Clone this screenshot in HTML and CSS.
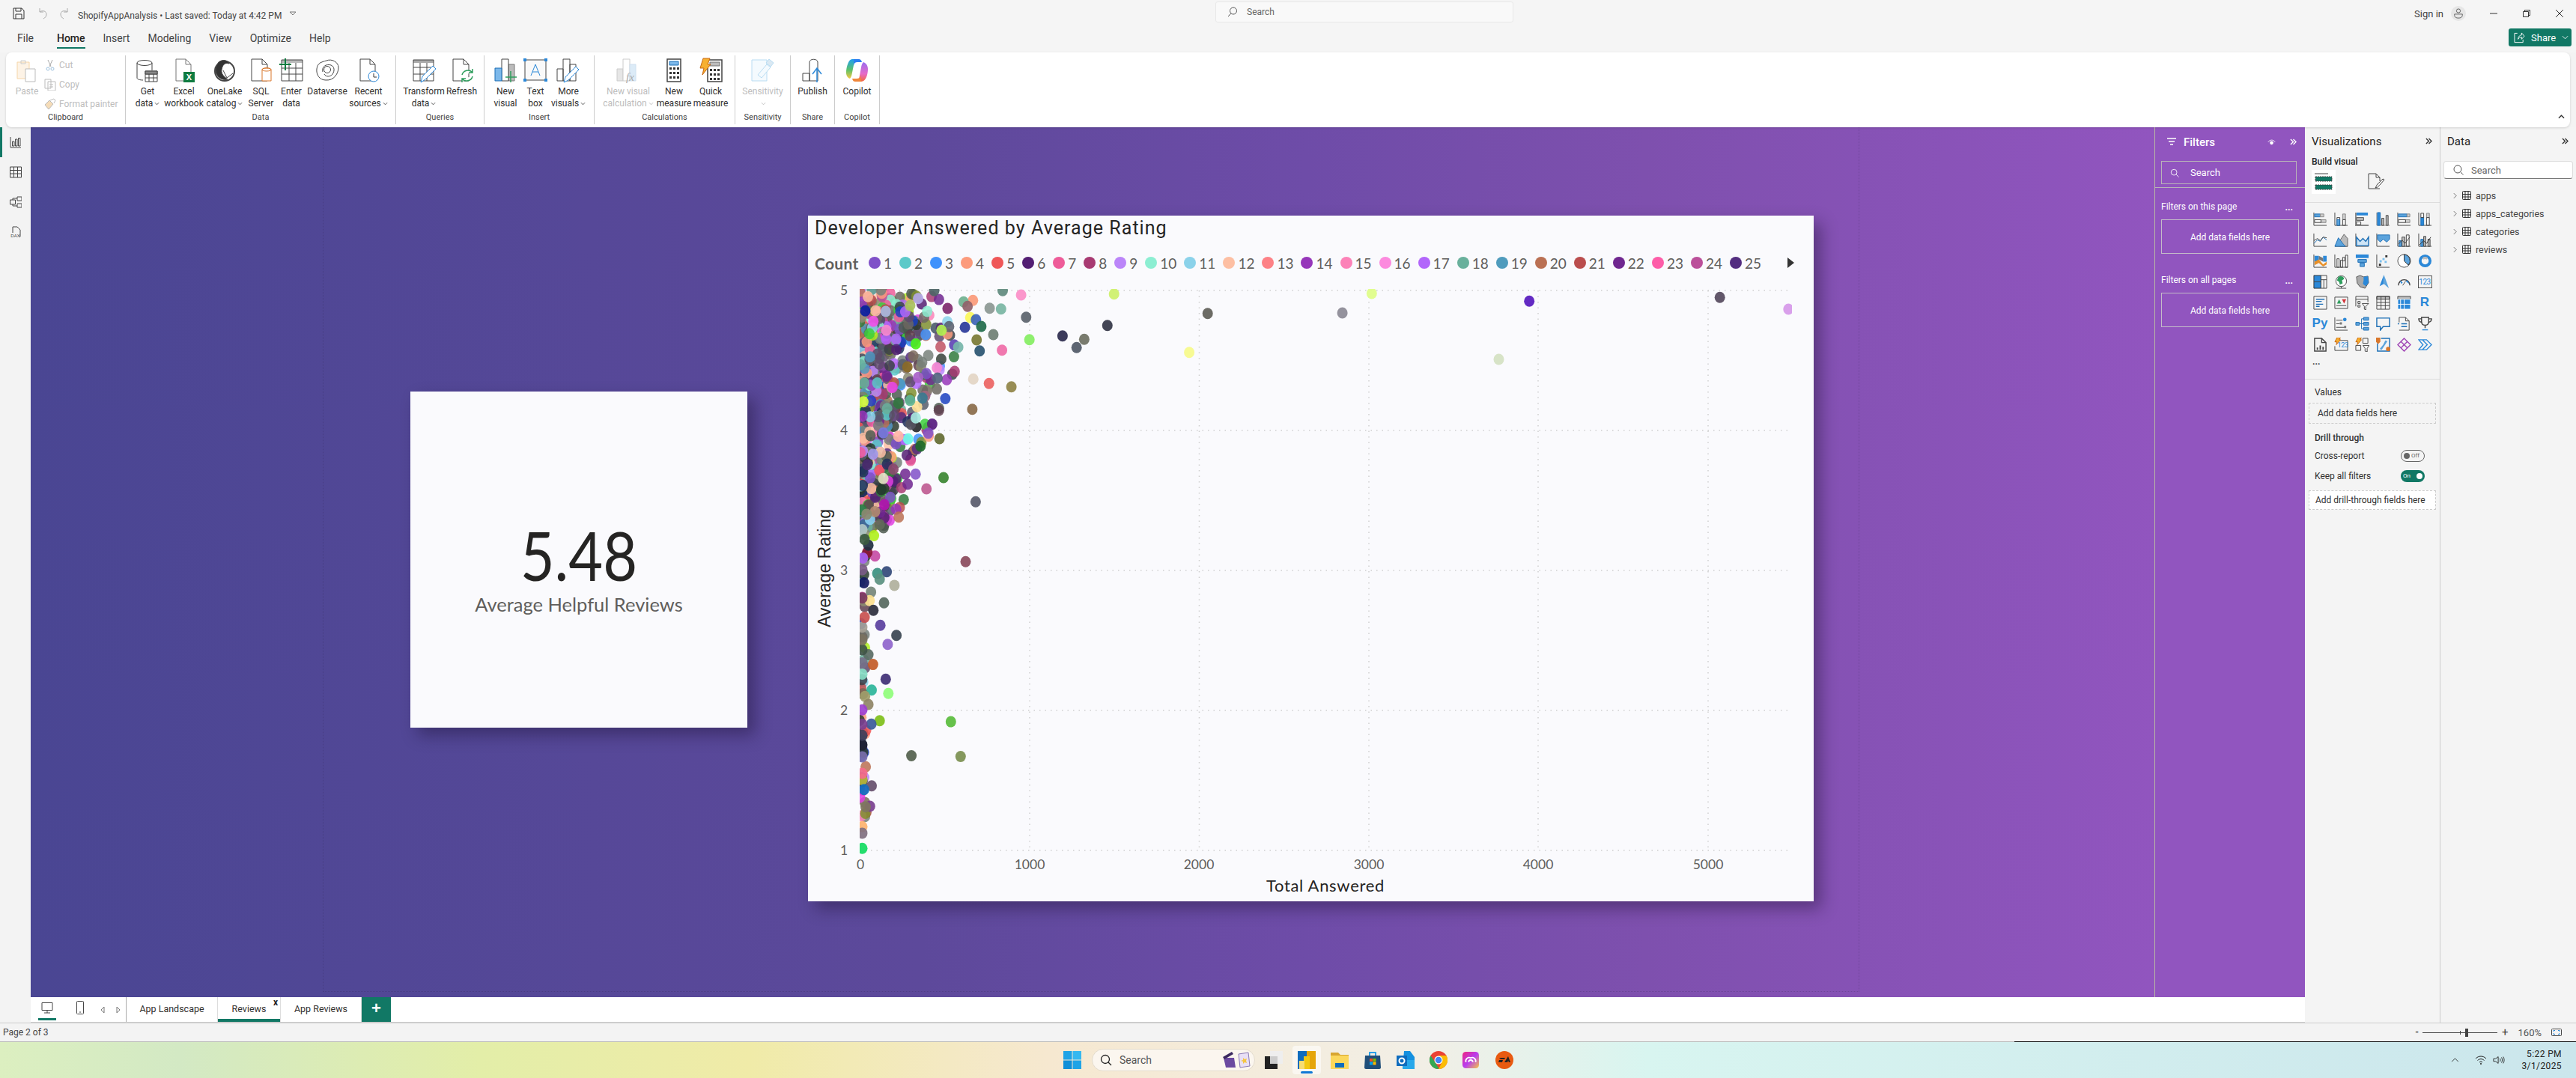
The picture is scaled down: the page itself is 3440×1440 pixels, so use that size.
FILE: index.html
```html
<!DOCTYPE html>
<html lang="en">
<head>
<meta charset="utf-8">
<title>ShopifyAppAnalysis</title>
<link rel="stylesheet" href="styles.css">
</head>
<body>
<div class="app">
  <header class="titlebar">
    <div class="qat">
      <svg class="ic q" viewBox="0 0 16 16"><path d="M1 1h11l3 3v11H1zM4 1v4h7V1M4 15V9h8v6"/></svg>
      <svg class="ic q dim" viewBox="0 0 16 16"><path d="M5 1v5h5M5 6c4-3 9-1 9 3 0 3-2 5-4 6"/></svg>
      <svg class="ic q dim" viewBox="0 0 16 16"><path d="M11 1v5H6M11 6C7 3 2 5 2 9c0 3 2 5 4 6"/></svg>
      <span class="docname">ShopifyAppAnalysis • Last saved: Today at 4:42 PM</span>
      <svg class="ic caret" viewBox="0 0 10 6"><path d="M1 1h8L5 5z"/></svg>
    </div>
    <div class="topsearch">
      <svg class="ic s14" viewBox="0 0 14 14"><circle cx="8" cy="5.500" r="4.500"/><path d="M4.800 9 1 13"/></svg>
      <span>Search</span>
    </div>
    <div class="winctl">
      <span class="signin">Sign in</span>
      <span class="avatar"><svg class="ic s14" viewBox="0 0 14 16"><circle cx="7" cy="4" r="3"/><path d="M1 9h12v2c0 3-3 4-6 4s-6-1-6-4z"/></svg></span>
      <svg class="ic wc" viewBox="0 0 12 12"><path d="M1 6h10"/></svg>
      <svg class="ic wc" viewBox="0 0 12 12"><path d="M1.500 3.500h7v7h-7zM3.500 3.500v-2h7v7h-2"/></svg>
      <svg class="ic wc" viewBox="0 0 12 12"><path d="m1 1 10 10M11 1 1 11"/></svg>
    </div>
    <nav class="tabs">
      <span class="file">File</span><span class="on">Home</span><span>Insert</span><span>Modeling</span><span>View</span><span>Optimize</span><span>Help</span>
    </nav>
    <div class="share">
      <svg class="ic sh" viewBox="0 0 16 16"><path d="M5 1.500H1v13h12v-4M6 10c0-4 3-6 5-6V1l4 4.500L11 10V7c-2 0-4 1-5 3z"/></svg>
      <span>Share</span>
      <svg class="ic shc" viewBox="0 0 10 6"><path d="m1 1 4 4 4-4"/></svg>
    </div>
  </header>

  <section class="ribbon">
    <div class="group g-clip">
      <div class="btns">
        <div class="rb w44 off">
          <svg class="ic i32" viewBox="0 0 32 32"><path stroke="#f5d5a8" fill="#fdf3e6" d="M3 5h16v22H3z"/><path stroke="#ccc" d="M8 3h6v4H8z"/><path stroke="#bbb" fill="#fff" d="M14 14h13v17H14z"/></svg>
          <span class="rl">Paste</span>
        </div>
        <div class="small off">
          <div class="sm"><svg class="ic s16" viewBox="0 0 16 16"><path stroke="#aaa" d="M5 1l4 9M11 1 7 10"/><circle stroke="#9fc2df" cx="5" cy="13" r="2"/><circle stroke="#9fc2df" cx="11" cy="13" r="2"/></svg><span>Cut</span></div>
          <div class="sm"><svg class="ic s16" viewBox="0 0 16 16"><path stroke="#bbb" d="M1 1h8v12H1zM5 4h10v12H5zM7 8h5M7 11h5"/></svg><span>Copy</span></div>
          <div class="sm"><svg class="ic s16" viewBox="0 0 16 16"><path stroke="#bbb" fill="#f5dcb8" d="M1 9l6-6 5 5-6 7z"/><path stroke="#bbb" d="m8 3 5-2 2 2-2 4"/></svg><span>Format painter</span></div>
        </div>
      </div>
      <div class="glabel">Clipboard</div>
    </div>
    <div class="group g-data">
      <div class="btns">
        <div class="rb w44">
          <svg class="ic i32" viewBox="0 0 32 32"><ellipse cx="12" cy="6" rx="10" ry="3.500"/><path d="M2 6v20c0 2 4 3 8 3M22 6v10"/><path fill="#fff" d="M13 17h16v14H13zM13 21h16M13 26h16M18 17v14M24 17v14"/><path fill="#888" d="M13 17h16v4H13z"/></svg>
          <span class="rl">Get<br>data<svg class="ic chv" viewBox="0 0 8 5"><path d="m1 1 3 3 3-3"/></svg></span>
        </div>
        <div class="rb w53">
          <svg class="ic i32" viewBox="0 0 32 32"><path stroke="#777" d="M5 1h13l7 7v22H5zM18 1v7h7"/><path stroke="none" fill="#107c41" d="M15 18h15v14H15z"/><text class="xl" x="22.500" y="29">X</text></svg>
          <span class="rl">Excel<br>workbook</span>
        </div>
        <div class="rb w56">
          <svg class="ic i32" viewBox="0 0 32 32"><circle cx="16" cy="17" r="13" stroke-width="2"/><path fill="#333" d="M8 5c5-4 12-3 14 2-6-2-9 2-10 8s3 9 8 13c-8 2-16-4-16-12 0-4 2-8 4-11z"/><path d="m14 16 5 10 8-6"/></svg>
          <span class="rl">OneLake<br>catalog<svg class="ic chv" viewBox="0 0 8 5"><path d="m1 1 3 3 3-3"/></svg></span>
        </div>
        <div class="rb w41">
          <svg class="ic i32" viewBox="0 0 32 32"><path d="M3 1h14l7 7v22H3zM17 1v7h7"/><path stroke="#d9772b" fill="#fff" d="M17 15c0-3 12-3 12 0v15H17z"/><ellipse stroke="#d9772b" cx="23" cy="15" rx="6" ry="2"/></svg>
          <span class="rl">SQL<br>Server</span>
        </div>
        <div class="rb w40">
          <svg class="ic i32" viewBox="0 0 32 32"><path fill="#bbb" stroke="none" d="M3 2h28v4H3z"/><path d="M3 2h28v28H3zM3 13h28M3 21h28M13 6v24M22 6v24"/><path stroke="#107c41" stroke-width="2" d="M8 0v16M0 8h16"/></svg>
          <span class="rl">Enter<br>data</span>
        </div>
        <div class="rb w56">
          <svg class="ic i32" viewBox="0 0 32 32"><path d="M15 3c7-3 16 2 16 9 0 8-6 18-17 17C6 29 1 22 2 14S8 5 15 3z"/><path d="M10 18c-2-7 5-11 11-9 5 2 5 8 2 12s-9 4-11 0"/><circle cx="16" cy="15" r="4.500"/></svg>
          <span class="rl">Dataverse</span>
        </div>
        <div class="rb w54">
          <svg class="ic i32" viewBox="0 0 32 32"><path d="M5 1h13l7 7v22H5zM18 1v7h7"/><circle stroke="#2b88d8" fill="#fff" cx="23" cy="24" r="7"/><path stroke="#333" d="M23 20v5h4"/></svg>
          <span class="rl">Recent<br>sources<svg class="ic chv" viewBox="0 0 8 5"><path d="m1 1 3 3 3-3"/></svg></span>
        </div>
      </div>
      <div class="glabel">Data</div>
    </div>
    <div class="group g-query">
      <div class="btns">
        <div class="rb w54">
          <svg class="ic i32" viewBox="0 0 32 32"><path fill="#aaa" stroke="none" d="M2 2h27v4H2z"/><path d="M2 2h27v28H2zM2 12h27M2 21h27M11 6v24M20 6v24"/><path stroke="#2b88d8" fill="#fff" d="m12 32 2-8 14-14 4 4-14 14z"/></svg>
          <span class="rl">Transform<br>data<svg class="ic chv" viewBox="0 0 8 5"><path d="m1 1 3 3 3-3"/></svg></span>
        </div>
        <div class="rb w47">
          <svg class="ic i32" viewBox="0 0 32 32"><path d="M4 1h14l7 7v22H4zM18 1v7h7"/><path stroke="#2f9e5e" fill="#fff" stroke-width="1.500" d="M16 22a8 8 0 0 1 14-3M30 24a8 8 0 0 1-14 3M30 14v5h-5M16 32v-5h5"/></svg>
          <span class="rl">Refresh</span>
        </div>
      </div>
      <div class="glabel">Queries</div>
    </div>
    <div class="group g-insert">
      <div class="btns">
        <div class="rb w44">
          <svg class="ic i32" viewBox="0 0 32 32"><path fill="#bbb" stroke="#777" d="M20 8h8v22h-8z"/><path fill="#fff" d="M11 1h9v29h-9z"/><path fill="#7cb8ea" stroke="#1d6fb5" d="M2 13h9v17H2z"/><path stroke="#2f9e5e" stroke-width="1.500" d="M23 17v15M16 25h15"/></svg>
          <span class="rl">New<br>visual</span>
        </div>
        <div class="rb w36">
          <svg class="ic i32" viewBox="0 0 32 32"><path fill="#f9f9f9" d="M2 2h28v27H2z"/><path stroke="none" fill="#2b88d8" d="M0 0h4v4H0zM28 0h4v4h-4zM0 27h4v4H0zM28 27h4v4h-4z"/><path stroke="#2b88d8" d="m10 23 6-15 6 15M12 18h8"/></svg>
          <span class="rl">Text<br>box</span>
        </div>
        <div class="rb w52">
          <svg class="ic i32" viewBox="0 0 32 32"><path d="M1 14h8v16H1zM9 1h9v29H9zM18 8h8v22h-8z"/><path stroke="#2b88d8" fill="#fff" d="m10 32 2-7L26 11l4 4-14 14z"/></svg>
          <span class="rl">More<br>visuals<svg class="ic chv" viewBox="0 0 8 5"><path d="m1 1 3 3 3-3"/></svg></span>
        </div>
      </div>
      <div class="glabel">Insert</div>
    </div>
    <div class="group g-calc">
      <div class="btns">
        <div class="rb w72 off">
          <svg class="ic i32" viewBox="0 0 32 32"><path stroke="#ccc" fill="#e6e6e6" d="M1 14h8v16H1z"/><path stroke="#ccc" fill="#fff" d="M9 1h9v29H9z"/><path stroke="#cfe0f0" fill="#dcebf7" d="M18 8h8v22h-8z"/><text class="fx" x="13" y="30">fx</text></svg>
          <span class="rl">New visual<br>calculation<svg class="ic chv" viewBox="0 0 8 5"><path d="m1 1 3 3 3-3"/></svg></span>
        </div>
        <div class="rb w50">
          <svg class="ic i32" viewBox="0 0 32 32"><path fill="#fff" stroke-width="1.500" d="M7 1h18v30H7z"/><path fill="#7cb8ea" stroke="#1d6fb5" d="M10 4h12v5H10z"/><path fill="#333" stroke="none" d="M10 12h3v3h-3zM15 12h3v3h-3zM20 12h3v3h-3zM10 18h3v3h-3zM15 18h3v3h-3zM20 18h3v3h-3zM10 24h3v3h-3zM15 24h3v3h-3zM20 24h3v3h-3z"/></svg>
          <span class="rl">New<br>measure</span>
        </div>
        <div class="rb w48">
          <svg class="ic i32" viewBox="0 0 32 32"><path fill="#fff" stroke-width="1.500" d="M12 2h19v29H12z"/><path fill="#bbb" stroke="#777" d="M15 5h13v5H15z"/><path fill="#333" stroke="none" d="M15 14h3v3h-3zM20 14h3v3h-3zM25 14h3v3h-3zM15 20h3v3h-3zM20 20h3v3h-3zM25 20h3v3h-3zM15 26h3v3h-3zM20 26h3v3h-3zM25 26h3v3h-3z"/><path fill="#f7b030" stroke="#c8660f" d="M6 0h9l-3 8h4L5 22l2-9H2z"/></svg>
          <span class="rl">Quick<br>measure</span>
        </div>
      </div>
      <div class="glabel">Calculations</div>
    </div>
    <div class="group g-sens">
      <div class="btns center">
        <div class="rb w72 off">
          <svg class="ic i32" viewBox="0 0 32 32"><path stroke="#b8dcf2" fill="#f4fafe" d="M1 2h20v28H1z"/><path stroke="#b8dcf2" fill="#f4fafe" d="m9 22 12-14 5 4-12 14z"/><path stroke="#b8dcf2" fill="#dbe9f3" d="m20 6 4-5 6 5-4 5z"/></svg>
          <span class="rl">Sensitivity<br><svg class="ic chv" viewBox="0 0 8 5"><path d="m1 1 3 3 3-3"/></svg></span>
        </div>
      </div>
      <div class="glabel">Sensitivity</div>
    </div>
    <div class="group g-share">
      <div class="btns center">
        <div class="rb w54">
          <svg class="ic i32" viewBox="0 0 32 32"><path d="M3 20h9v10H3zM12 5c0-5 11-5 11 0v25H12z"/><path stroke="#2b88d8" fill="none" stroke-width="1.500" d="M22 32V13M16 21l6-8 6 8"/></svg>
          <span class="rl">Publish</span>
        </div>
      </div>
      <div class="glabel">Share</div>
    </div>
    <div class="group g-copilot">
      <div class="btns center">
        <div class="rb w54">
          <svg class="ic i32" viewBox="0 0 32 32">
            <defs>
              <linearGradient id="cpa" x1="0" y1="0" x2="0" y2="1"><stop offset="0" stop-color="#1fa0f0"/><stop offset=".55" stop-color="#5cc26a"/><stop offset="1" stop-color="#f5c842"/></linearGradient>
              <linearGradient id="cpb" x1="0" y1="0" x2="0" y2="1"><stop offset="0" stop-color="#9a6ef0"/><stop offset=".6" stop-color="#e66ac8"/><stop offset="1" stop-color="#f5683c"/></linearGradient>
            </defs>
            <path stroke="none" fill="url(#cpa)" d="M9 1h8l-5 3-3 15c-.6 3-1 6-3 8-3-1-5-4-5-8 0-7 3-18 8-18z"/>
            <path stroke="none" fill="url(#cpb)" d="M21 31h-7l4-3 3-16c.5-3 1-5 3-7 3 1 6 4 6 9 0 8-3 17-9 17z"/>
            <path stroke="none" fill="#2d7ff0" d="M11 1h7c2 0 3 1 4 4h-6c-3 0-4 1-5 4z"/>
            <path stroke="none" fill="#f0873c" d="M21 31h-8c-2 0-3-1-4-4h6c3 0 4-1 5-4z"/>
          </svg>
          <span class="rl">Copilot</span>
        </div>
      </div>
      <div class="glabel">Copilot</div>
    </div>
    <svg class="ic collapse" viewBox="0 0 10 6"><path d="m1 5 4-4 4 4"/></svg>
  </section>

  <main class="work">
    <aside class="leftnav">
      <div class="navi on"><svg class="ic s16b" viewBox="0 0 16 16"><path d="M1 1v14h14M3.500 7h2.500v6H3.500zM7.500 4H10v9H7.500zM11.500 2.500H14V13h-2.500z"/></svg></div>
      <div class="navi"><svg class="ic s16b" viewBox="0 0 16 16"><path d="M.5 1h15v14H.5zM.5 5.500h15M.5 10h15M5.500 1v14M10.500 1v14"/></svg></div>
      <div class="navi"><svg class="ic s16b" viewBox="0 0 16 16"><path d="M.5 5h7v6h-7zM10 1h6v5h-6zM10 10h6v5h-6zM4 5V3h6M4 11v2h6"/></svg></div>
      <div class="navi"><svg class="ic s16b" viewBox="0 0 16 16"><path d="M4 9V1h6l4 4v9l-1 1"/><text class="dax" x="7.500" y="15">DAX</text></svg></div>
    </aside>

    <div class="canvas">
      <div class="guide"></div>
      <article class="visual kpi">
        <div class="kpi-val">5.48</div>
        <div class="kpi-lab">Average Helpful Reviews</div>
      </article>
      <article class="visual chart">
        <h2 class="ch-title">Developer Answered by Average Rating</h2>
        <div class="legend">
          <b>Count</b>
          <span class="li"><i class="c1"></i>1</span><span class="li"><i class="c2"></i>2</span><span class="li"><i class="c3"></i>3</span><span class="li"><i class="c4"></i>4</span><span class="li"><i class="c5"></i>5</span><span class="li"><i class="c6"></i>6</span><span class="li"><i class="c7"></i>7</span><span class="li"><i class="c8"></i>8</span><span class="li"><i class="c9"></i>9</span><span class="li"><i class="c10"></i>10</span><span class="li"><i class="c11"></i>11</span><span class="li"><i class="c12"></i>12</span><span class="li"><i class="c13"></i>13</span><span class="li"><i class="c14"></i>14</span><span class="li"><i class="c15"></i>15</span><span class="li"><i class="c16"></i>16</span><span class="li"><i class="c17"></i>17</span><span class="li"><i class="c18"></i>18</span><span class="li"><i class="c19"></i>19</span><span class="li"><i class="c20"></i>20</span><span class="li"><i class="c21"></i>21</span><span class="li"><i class="c22"></i>22</span><span class="li"><i class="c23"></i>23</span><span class="li"><i class="c24"></i>24</span><span class="li"><i class="c25"></i>25</span>
          <span class="more"></span>
        </div>
        <svg class="plot" viewBox="1079 370 1343 834">
          <defs><clipPath id="plotclip"><rect x="1148" y="386" width="1245" height="756"/></clipPath></defs>
          <g class="grid">
            <path d="M1148 388H2393M1148 575H2393M1148 762H2393M1148 949H2393M1148 1136H2393"/>
            <path d="M1375 388V1136M1601.500 388V1136M1828 388V1136M2054 388V1136M2281 388V1136"/>
          </g>
          <g id="dots" clip-path="url(#plotclip)"></g>
          <g class="tick">
            <text x="1127" y="394">5</text><text x="1127" y="581">4</text><text x="1127" y="768">3</text><text x="1127" y="955">2</text><text x="1127" y="1142">1</text>
            <text x="1149" y="1161">0</text><text x="1375" y="1161">1000</text><text x="1601" y="1161">2000</text><text x="1828" y="1161">3000</text><text x="2054" y="1161">4000</text><text x="2281" y="1161">5000</text>
          </g>
          <text class="xt" x="1770" y="1191">Total Answered</text>
          <text class="yt" transform="translate(1109 759) rotate(-90)">Average Rating</text>
        </svg>
      </article>
    </div>

    <aside class="filters">
      <div class="fhead">
        <svg class="ic fi" viewBox="0 0 14 12"><path d="M1 1h12M3 5h8M5 9h4"/></svg>
        <span>Filters</span>
        <svg class="ic fe" viewBox="0 0 14 10"><path d="M1 5c3-5 9-5 12 0"/><circle fill="#fff" stroke="none" cx="7" cy="6" r="3"/></svg>
        <svg class="ic fc" viewBox="0 0 10 10"><path d="m1 1 4 4-4 4M5 1l4 4-4 4"/></svg>
      </div>
      <div class="fsearch">
        <svg class="ic s14w" viewBox="0 0 14 14"><circle cx="6" cy="6" r="4.500"/><path d="m9.500 9.500 4 4"/></svg>
        <span>Search</span>
      </div>
      <div class="fsec">
        <div class="frow"><span>Filters on this page</span><span class="dots">...</span></div>
        <div class="fbox">Add data fields here</div>
      </div>
      <div class="fsec">
        <div class="frow"><span>Filters on all pages</span><span class="dots">...</span></div>
        <div class="fbox">Add data fields here</div>
      </div>
    </aside>

    <aside class="viz">
      <div class="phead"><span>Visualizations</span><svg class="ic pc" viewBox="0 0 10 10"><path d="m1 1 4 4-4 4M5 1l4 4-4 4"/></svg></div>
      <div class="bv">Build visual</div>
      <div class="vtabs">
        <span class="vt on"><svg class="ic s24" viewBox="0 0 24 24"><path d="M0 1h18"/><path fill="#117865" stroke="#444" stroke-dasharray="2 1" d="M1 5h22v6H1zM1 16h22v6H1z"/></svg></span>
        <span class="vt"><svg class="ic s24" viewBox="0 0 24 24"><path d="M17 21H2V1h10l5 5v5M12 1v5h5"/><path d="M11 20c4 0 4-3 7-5l5-6-2-1-6 6c-2 1-2 3-4 6z"/></svg></span>
      </div>
      <div class="vicons">
        <svg class="ic v" viewBox="0 0 20 20"><path d="M1 1v18h18"/><path fill="#5ba3dc" stroke="#1d6fb5" d="M2 3h8v4H2z"/><path fill="#ccc" stroke="#888" d="M10 3h5v4h-5zM11 11h7v4h-7z"/><path d="M2 11h9v4H2z"/></svg>
        <svg class="ic v" viewBox="0 0 20 20"><path d="M1 1v18h18M4 8h4v11H4z"/><path fill="#5ba3dc" stroke="#1d6fb5" d="M4 11h4v8H4z"/><path fill="#ccc" stroke="#888" d="M12 3h4v8h-4z"/><path d="M12 11h4v8h-4z"/></svg>
        <svg class="ic v" viewBox="0 0 20 20"><path stroke-width="2" stroke="#888" d="M1 1v18h18"/><path fill="#2b88d8" stroke="none" d="M2 1h16v4H2z"/><path fill="#bbb" stroke="#555" d="M2 8h10v4H2z"/><path d="M2 14h6v4H2z" fill="#fff"/></svg>
        <svg class="ic v" viewBox="0 0 20 20"><path stroke="#888" d="M1 1v18h18"/><path fill="#2b88d8" stroke="#1d6fb5" d="M2 1h4v18H2z"/><path fill="#bbb" d="M8 9h3v10H8zM14 5h3v14h-3z"/></svg>
        <svg class="ic v" viewBox="0 0 20 20"><path d="M1 1v18h18"/><path fill="#5ba3dc" stroke="#1d6fb5" d="M2 3h12v4H2z"/><path fill="#ccc" stroke="#888" d="M14 3h4v4h-4zM12 11h6v4h-6z"/><path d="M2 11h10v4H2z"/></svg>
        <svg class="ic v" viewBox="0 0 20 20"><path d="M1 1v18h18"/><path fill="#2b88d8" stroke="#1d6fb5" d="M4 8h4v11H4z"/><path d="M4 2h4v6H4z"/><path fill="#ccc" stroke="#888" d="M12 2h4v6h-4z"/><path d="M12 8h4v11h-4z"/></svg>

        <svg class="ic v" viewBox="0 0 20 20"><path d="M1 1v18h18"/><path stroke="#1d6fb5" d="m1 15 5-5 4 2 4-6 5 4"/><path d="m1 11 5-3 4 3 4-5 5 1"/></svg>
        <svg class="ic v" viewBox="0 0 20 20"><path d="M1 19h18"/><path fill="#bbb" stroke="#666" d="m8 11 6-9 5 6v11H8z"/><path fill="#5ba3dc" stroke="#1d6fb5" d="m1 19 5-12 7 9 3 3z"/></svg>
        <svg class="ic v" viewBox="0 0 20 20"><path d="M1 1v18h18"/><path stroke="#1d6fb5" stroke-width="1.500" fill="#cfe5f6" d="m2 6 5 6 4-4 4 4 4-6v12H2z"/></svg>
        <svg class="ic v" viewBox="0 0 20 20"><path d="M1 1v18h18"/><path fill="#5ba3dc" stroke="#1d6fb5" d="M2 3h17v6l-4 4-5-4-4 4-4-4z"/></svg>
        <svg class="ic v" viewBox="0 0 20 20"><path d="M1 1v18h18M13 3h4v16h-4z"/><path fill="#bbb" d="M7 6h4v13H7z"/><path fill="#5ba3dc" stroke="#1d6fb5" d="M3 11h3v8H3z"/><path d="m2 16 5-6 4 5 7-9"/></svg>
        <svg class="ic v" viewBox="0 0 20 20"><path d="M1 1v18h18"/><path fill="#5ba3dc" stroke="#1d6fb5" d="M4 9h3v10H4z"/><path fill="#bbb" d="M8 5h3v14H8zM14 9h3v10h-3z"/><path stroke="#333" d="m2 17 6-6 4 4 6-9"/></svg>

        <svg class="ic v" viewBox="0 0 20 20"><path d="M1 1v18h18"/><path fill="#2b88d8" stroke="none" d="M2 3h6v8H2zM14 3h5v8h-5z"/><path fill="#e8912a" stroke="none" d="m2 11 6-3 6 7 5-4v4l-5 3-6-5-6 3z"/><path fill="#777" stroke="none" d="m8 3 6 3v5l-6-3z"/></svg>
        <svg class="ic v" viewBox="0 0 20 20"><path d="M1 1v18h18M4 7v12h3V7zM9 9v10h3V9zM12 5h3v5h-3zM16 2h3v17h-3z"/></svg>
        <svg class="ic v" viewBox="0 0 20 20"><path fill="#2b88d8" stroke="none" d="M1 1h18v5H1z"/><path fill="#5ba3dc" stroke="#1d6fb5" d="M4 8h12v4H4zM7 13h6v5H7z"/></svg>
        <svg class="ic v" viewBox="0 0 20 20"><path d="M1 1v18h18"/><path fill="#333" stroke="none" d="M4 14h3v3H4zM13 2h3v3h-3z"/><path fill="#7cc0ee" stroke="none" d="M9 6h3v3H9zM5 9h3v3H5zM12 10h3v3h-3z"/></svg>
        <svg class="ic v" viewBox="0 0 20 20"><circle fill="#fff" cx="10" cy="10" r="9"/><path fill="#5ba3dc" stroke="#333" d="M10 1a9 9 0 0 1 6 15l-6-6z"/></svg>
        <svg class="ic v" viewBox="0 0 20 20"><circle fill="none" stroke="#2b88d8" stroke-width="4" cx="10" cy="10" r="7"/><path stroke="#bbb" stroke-width="3" d="M7 7a5 5 0 0 1 6 0"/></svg>

        <svg class="ic v" viewBox="0 0 20 20"><path fill="#2b88d8" stroke="#333" d="M1 1h10v18H1z"/><path d="M1 10h10M11 1h8v18h-8zM11 7h8M15 7v12"/></svg>
        <svg class="ic v" viewBox="0 0 20 20"><circle fill="#fff" cx="10" cy="9" r="7.500"/><path fill="#2f9e5e" stroke="none" d="M6 3c4-2 8 0 8 3l-3 2 1 4-4 2-1-4-3-2z"/><path d="M3 19h14M10 16.500V19"/></svg>
        <svg class="ic v" viewBox="0 0 20 20"><path fill="#aaa" stroke="#555" d="M2 3l5-2 5 2 6-1 1 9-5 8-7-2-4-5z"/><path fill="#2b88d8" stroke="none" d="m12 3 6-1 1 9-4 5-4-3 1-5z"/></svg>
        <svg class="ic v" viewBox="0 0 20 20"><path fill="#2b88d8" stroke="none" d="M11 0 5 16l6-3z"/><path fill="#5ba3dc" stroke="none" d="m11 0 7 19-7-6z"/></svg>
        <svg class="ic v" viewBox="0 0 20 20"><path stroke-width="1.500" d="M2 15a8 8 0 0 1 16 0"/><path fill="#2b88d8" stroke="none" d="M6 13 4 8l4 3zM12 9l3-1 2 5z"/><path d="m8 15 4-6"/></svg>
        <span class="v cardi">123</span>

        <svg class="ic v" viewBox="0 0 20 20"><path d="M1 1h18v18H1z"/><path stroke="#1d6fb5" stroke-width="1.500" d="M4 5h12M4 8h8M4 12h10M4 15h5"/></svg>
        <svg class="ic v" viewBox="0 0 20 20"><path d="M1 2h18v16H1zM3 14h14"/><path fill="#2f9e5e" stroke="none" d="m4 11 3-6 3 6z"/><path fill="#d13438" stroke="none" d="m11 5h6l-3 6z"/></svg>
        <svg class="ic v" viewBox="0 0 20 20"><path d="M1 15V1h17v8M1 5h17M4 8h3v3H4zM4 13h3v3H4z"/><path d="m10 11h9l-4 4v5l-2-1v-4z"/></svg>
        <svg class="ic v" viewBox="0 0 20 20"><path fill="#bbb" stroke="#444" d="M1 1h18v4H1z"/><path d="M1 1h18v18H1zM1 9.500h18M1 14h18M7 1v18M13 1v18"/></svg>
        <svg class="ic v" viewBox="0 0 20 20"><path fill="#bbb" stroke="#444" d="M1 1h18v4H1z"/><path fill="#2b88d8" stroke="#fff" d="M1 5h18v14H1zM1 12h18M10 5v14M5 5v14"/></svg>
        <span class="v lang r">R</span>

        <span class="v lang py">Py</span>
        <svg class="ic v" viewBox="0 0 20 20"><path d="M1 1v18h18M3 5h9M3 10h5M3 15h12"/><circle fill="#2b88d8" stroke="none" cx="15" cy="4" r="2.500"/><path fill="#777" stroke="none" d="M8 8h3v3H8zM14 13h3v3h-3z"/></svg>
        <svg class="ic v" viewBox="0 0 20 20"><path fill="#5ba3dc" stroke="#1d6fb5" d="M1 8h5v4H1zM12 1h7v4h-7zM12 8h7v4h-7zM12 15h7v4h-7z"/><path stroke="#1d6fb5" d="M6 10h3M9 3v14M9 3h3M9 10h3M9 17h3"/></svg>
        <svg class="ic v" viewBox="0 0 20 20"><path stroke="#1d6fb5" stroke-width="1.500" d="M1 2h18v12H10l-4 5v-5H1z"/></svg>
        <svg class="ic v" viewBox="0 0 20 20"><path d="M3 19h14V6l-5-5H3v7M12 1v5h5"/><path stroke="#1d6fb5" stroke-width="1.500" d="M1 10h2M6 10h8M6 14h8"/></svg>
        <svg class="ic v" viewBox="0 0 20 20"><path stroke-width="1.500" d="M5 1h10v6c0 3-2 5-5 5s-5-2-5-5zM5 3H1c0 3 2 5 5 5M15 3h4c0 3-2 5-5 5M10 12v4"/><path stroke="#2b88d8" stroke-width="1.500" d="M6 18.500h8"/></svg>

        <svg class="ic v" viewBox="0 0 20 20"><path stroke-width="1.500" d="M2 19V1h10l6 6v12zM12 1v6h6"/><path fill="#444" stroke="none" d="M5 14h2v3H5zM9 11h2v6H9zM13 13h2v4h-2z"/></svg>
        <span class="v lcard"><svg class="ic v" viewBox="0 0 20 20"><path d="M3 4h16v14H1v-6"/><path fill="#f7b030" stroke="#c8660f" d="M4 0h5L7 3h2L3 10l1-4H1z"/></svg><em>123</em></span>
        <svg class="ic v" viewBox="0 0 20 20"><path d="M11 1h7v7h-7zM1 11h7v7H1zM11 11h9l-3 4v5l-3-1v-4z"/><path fill="#f7b030" stroke="#c8660f" d="M4 0h5L7 3h2L3 10l1-4H1z"/></svg>
        <svg class="ic v" viewBox="0 0 20 20"><path stroke="#1d6fb5" stroke-width="1.500" d="M2 8v11h17V1H7"/><path fill="#5ba3dc" stroke="none" d="m5 16 5-6 3-6 3 1-4 6-4 6z"/><path fill="#d9772b" stroke="none" d="M0 0h6v6l-3 3-3-3z"/><circle fill="#d9772b" stroke="none" cx="17" cy="16" r="3"/></svg>
        <svg class="ic v" viewBox="0 0 20 20"><path stroke="#a045b5" stroke-width="1.500" d="m10 1 9 9-9 9-9-9zM5.500 5.500l9 9M14.500 5.500l-9 9"/></svg>
        <svg class="ic v" viewBox="0 0 20 20"><path stroke="#2b88d8" stroke-width="1.500" d="M1 3h11l7 7-7 7H1l6-7zM6 3l7 7-7 7"/></svg>
      </div>
      <div class="vmore">...</div>
      <div class="vsec">
        <div class="vl">Values</div>
        <div class="dash">Add data fields here</div>
        <div class="vb">Drill through</div>
        <div class="tgrow"><span>Cross-report</span><span class="tg off"><u></u>Off</span></div>
        <div class="tgrow"><span>Keep all filters</span><span class="tg ton">On<u></u></span></div>
        <div class="dash white">Add drill-through fields here</div>
      </div>
    </aside>

    <aside class="data">
      <div class="phead"><span>Data</span><svg class="ic pc" viewBox="0 0 10 10"><path d="m1 1 4 4-4 4M5 1l4 4-4 4"/></svg></div>
      <div class="dsearch">
        <svg class="ic s14" viewBox="0 0 14 14"><circle cx="6" cy="6" r="5"/><path d="m9.500 9.500 4 4"/></svg>
        <span>Search</span>
      </div>
      <ul class="tree">
        <li><svg class="ic tc" viewBox="0 0 6 10"><path d="m1 1 4 4-4 4"/></svg><svg class="ic tt" viewBox="0 0 12 12"><path d="M.5 1.500a1 1 0 0 1 1-1h9a1 1 0 0 1 1 1v9a1 1 0 0 1-1 1h-9a1 1 0 0 1-1-1zM.5 4.500h11M.5 8h11M4 .5v11M8 .5v11"/></svg>apps</li>
        <li><svg class="ic tc" viewBox="0 0 6 10"><path d="m1 1 4 4-4 4"/></svg><svg class="ic tt" viewBox="0 0 12 12"><path d="M.5 1.500a1 1 0 0 1 1-1h9a1 1 0 0 1 1 1v9a1 1 0 0 1-1 1h-9a1 1 0 0 1-1-1zM.5 4.500h11M.5 8h11M4 .5v11M8 .5v11"/></svg>apps_categories</li>
        <li><svg class="ic tc" viewBox="0 0 6 10"><path d="m1 1 4 4-4 4"/></svg><svg class="ic tt" viewBox="0 0 12 12"><path d="M.5 1.500a1 1 0 0 1 1-1h9a1 1 0 0 1 1 1v9a1 1 0 0 1-1 1h-9a1 1 0 0 1-1-1zM.5 4.500h11M.5 8h11M4 .5v11M8 .5v11"/></svg>categories</li>
        <li><svg class="ic tc" viewBox="0 0 6 10"><path d="m1 1 4 4-4 4"/></svg><svg class="ic tt" viewBox="0 0 12 12"><path d="M.5 1.500a1 1 0 0 1 1-1h9a1 1 0 0 1 1 1v9a1 1 0 0 1-1 1h-9a1 1 0 0 1-1-1zM.5 4.500h11M.5 8h11M4 .5v11M8 .5v11"/></svg>reviews</li>
      </ul>
    </aside>

    <div class="pagetabs">
      <div class="pt-ctl">
        <span class="dev on"><svg class="ic s16b" viewBox="0 0 16 16"><path d="M1 1.500h14v10H1zM8 11.500V15M4 15h8"/></svg></span>
        <span class="dev mobile"><svg class="ic mob" viewBox="0 0 10 18"><path d="M1.500.5h7a1 1 0 0 1 1 1v15a1 1 0 0 1-1 1h-7a1 1 0 0 1-1-1v-15a1 1 0 0 1 1-1zM4 15h2"/></svg></span>
        <svg class="ic arr" viewBox="0 0 6 10"><path d="M5 1 1 5l4 4z"/></svg>
        <svg class="ic arr" viewBox="0 0 6 10"><path d="m1 1 4 4-4 4z"/></svg>
      </div>
      <div class="pt t1">App Landscape</div>
      <div class="pt t2 on">Reviews<span class="x">x</span></div>
      <div class="pt t3">App Reviews</div>
      <div class="addtab">+</div>
    </div>
  </main>

  <footer class="status">
    <span class="pg">Page 2 of 3</span>
    <div class="zoom">
      <span class="zm">-</span>
      <span class="zline"><i class="ztick"></i><i class="zthumb"></i></span>
      <span class="zp">+</span>
      <span class="zv">160%</span>
      <svg class="ic zf" viewBox="0 0 14 10"><path d="M1.500.5h11a1 1 0 0 1 1 1v7a1 1 0 0 1-1 1h-11a1 1 0 0 1-1-1v-7a1 1 0 0 1 1-1z"/><path d="M3 4V2.500h2M11 4V2.500H9M3 6v1.500h2M11 6v1.500H9" stroke="#2b88d8"/></svg>
    </div>
    <i class="blackline"></i>
  </footer>

  <div class="taskbar">
    <div class="tb-center">
      <svg class="tbi win" viewBox="0 0 24 24"><path fill="#1ea3e6" d="M0 0h11.500v11.500H0z"/><path fill="#35b8f0" d="M12.500 0H24v11.500H12.500z"/><path fill="#0f8fd8" d="M0 12.500h11.500V24H0z"/><path fill="#1ea3e6" d="M12.500 12.500H24V24H12.500z"/></svg>
      <div class="tsearch">
        <svg class="ic s16d" viewBox="0 0 16 16"><circle cx="7" cy="7" r="5.500"/><path d="m11 11 4 4"/></svg>
        <span>Search</span>
        <svg class="tbi clap" viewBox="0 0 38 24"><path fill="#6b4aa0" d="M1 9h14l2 13H4z"/><path fill="#3c2a60" d="m0 8 12-7 2 3L2 11z"/><path fill="#e8dff5" stroke="#8a7ab5" d="m21 4 13-2 2 18-13 2z"/><path fill="#f5c542" d="m27 9 2 2 3-1-1 3 1 3-3-1-2 2v-3l-3-1 3-1z"/></svg>
      </div>
      <svg class="tbi s24t tv" viewBox="0 0 24 24"><path fill="#eee" d="M7 0h17v17H7z"/><path fill="#222" d="M0 7h17v17H0z"/><path fill="#ccc" d="M7 7h10v10H7z"/></svg>
      <span class="tb-active">
        <svg class="tbi s24t" viewBox="0 0 24 24"><path fill="#0f6cbd" d="M0 0h24v24H0z"/><path fill="#e5a50a" d="M12 0h12v24H12z"/><path fill="#f2c811" d="M8 7h8v17H8z"/><path fill="#f7dd72" d="M2 13h7v11H2z"/></svg>
        <i></i>
      </span>
      <svg class="tbi s24t" viewBox="0 0 24 24"><path fill="#d8a530" d="M0 2h10l3 3h11v4H0z"/><path fill="#fbd75b" d="M0 6h24v18H0z"/><path fill="#0f6cbd" d="M6 16h12v6H6z"/></svg>
      <svg class="tbi s24t" viewBox="0 0 24 24"><path fill="none" stroke="#2ba0e8" stroke-width="2" d="M8 6V2h8v4"/><path fill="#1f4e79" d="M2 6h20l1 16c0 1-1 2-2 2H3c-1 0-2-1-2-2z"/><path fill="#f25022" d="M8 10h4v4H8z"/><path fill="#7fba00" d="M12.500 10h4v4h-4z"/><path fill="#00a4ef" d="M8 14.500h4v4H8z"/><path fill="#ffb900" d="M12.500 14.500h4v4h-4z"/></svg>
      <svg class="tbi s24t" viewBox="0 0 24 24"><path fill="#1490df" d="M10 0h8l6 8v16H8z"/><path fill="#28a8ea" d="M8 12h16v12H8z"/><path fill="#0f6cbd" d="M0 6h14v14H0z"/><circle fill="none" stroke="#fff" stroke-width="2" cx="7" cy="13" r="3.500"/></svg>
      <svg class="tbi s24t" viewBox="0 0 24 24"><circle fill="#ea4335" cx="12" cy="12" r="12"/><path fill="#34a853" d="M12 24A12 12 0 0 1 1.600 6L8 16l5 8z"/><path fill="#fbbc05" d="M12 24a12 12 0 0 0 10.400-18H12l4 10z"/><circle fill="#fff" cx="12" cy="12" r="5.500"/><circle fill="#4285f4" cx="12" cy="12" r="4.300"/></svg>
      <svg class="tbi s22t" viewBox="0 0 24 24"><defs><linearGradient id="cc" x1="0" y1="0" x2="1" y2="1"><stop offset="0" stop-color="#f0247e"/><stop offset=".5" stop-color="#b83cf0"/><stop offset="1" stop-color="#f5c842"/></linearGradient></defs><rect fill="url(#cc)" width="24" height="24" rx="5"/><path fill="none" stroke="#fff" stroke-width="2" d="M5 15a5 5 0 0 1 7-6 5 5 0 0 1 7 6M9 15a3 3 0 0 1 6 0"/></svg>
      <svg class="tbi s24t" viewBox="0 0 24 24"><circle fill="#e85a10" cx="12" cy="12" r="12"/><path fill="#222" d="M5 9h8l-1 2H7zM4 15l1-3h5l-1 3zM12 15l5-8 3 8h-2l-1-2-1 2z"/></svg>
    </div>
    <div class="tray">
      <svg class="ic tr-c" viewBox="0 0 12 7"><path d="m1 6 5-5 5 5"/></svg>
      <svg class="ic tr-w" viewBox="0 0 16 12"><path d="M1 4c4-4 10-4 14 0M3.500 6.500c3-2.500 6-2.500 9 0M6 9c1.300-1 2.700-1 4 0"/><circle fill="#222" stroke="none" cx="8" cy="11" r="1"/></svg>
      <svg class="ic tr-s" viewBox="0 0 18 12"><path d="M1 4h3l4-3v10L4 8H1zM10.500 3.500c1 1.500 1 3.500 0 5M13 2c1.500 2.500 1.500 5.500 0 8M15.500 1c2 3 2 7 0 10"/></svg>
      <div class="clock"><span>5:22 PM</span><span>3/1/2025</span></div>
    </div>
  </div>
</div>
<script src="app.js"></script>
</body>
</html>
```
FILE: styles.css
```css
* { box-sizing: border-box; }
html, body { margin: 0; padding: 0; }
body { width: 3440px; height: 1440px; overflow: hidden; font-family: Roboto, "Liberation Sans", sans-serif; font-size: 12px; color: #323130; background: #f3f3f3; }
.app { width: 3440px; height: 1440px; display: flex; flex-direction: column; }
.ic { fill: none; stroke: #444; stroke-width: 1; display: block; flex: none; }
.tbi { display: block; flex: none; }

/* title bar */
.titlebar { height: 70px; background: #f5f5f5; display: grid; grid-template-columns: 1623px 398px 1fr; grid-template-rows: 36px 34px; position: relative; }
.qat { display: flex; align-items: center; padding-left: 17px; gap: 15px; }
.q { width: 16px; height: 16px; stroke: #333; }
.q.dim { stroke: #aaa; }
.docname { margin-left: -6px; font-size: 12px; color: #444; padding-top: 6px; }
.caret { width: 10px; height: 6px; margin-left: -5px; stroke: #777; }
.topsearch { height: 28px; margin-top: 2px; background: #f9f9f9; border: 1px solid #e8e8e8; border-radius: 3px; display: flex; align-items: center; gap: 12px; padding-left: 15px; color: #666; font-size: 12px; }
.s14 { width: 14px; height: 14px; stroke: #555; }
.winctl { display: flex; align-items: center; justify-content: flex-end; color: #444; padding-right: 16px; }
.signin { margin-right: 10px; font-size: 13px; }
.avatar { width: 20px; height: 20px; border-radius: 50%; background: #e6e6e6; display: flex; align-items: center; justify-content: center; margin-right: 31px; }
.wc { width: 12px; height: 12px; margin-left: 32px; stroke: #333; }
.avatar + .wc { margin-left: 0; }
.tabs { grid-column: 1 / 3; display: flex; gap: 24px; padding: 1px 0 0 23px; font-size: 14px; line-height: 28px; color: #444; }
.tabs span { height: 28px; }
.tabs .file { margin-right: 7px; }
.tabs .on { color: #252423; font-weight: 500; border-bottom: 2px solid #117865; }
.share { grid-column: 3; justify-self: end; margin: 2px 6px 0 0; width: 84px; height: 24px; border-radius: 3px; background: #117865; color: #fff; display: flex; align-items: center; gap: 8px; padding-left: 7px; font-size: 13px; }
.sh { width: 15px; height: 15px; stroke: #fff; }
.shc { width: 9px; height: 6px; stroke: #fff; }

/* ribbon */
.ribbon { height: 100px; width: 3424px; margin-left: 8px; background: #fff; border-radius: 8px; display: flex; padding: 4px 0; position: relative; z-index: 3; box-shadow: 0 1px 3px rgba(0,0,0,.15); }
.group { height: 92px; border-right: 1px solid #ccc; display: flex; flex-direction: column; }
.btns { height: 74px; display: flex; align-items: flex-start; padding-top: 4px; }
.btns.center { justify-content: center; }
.glabel { text-align: center; font-size: 11px; line-height: 16px; color: #444; margin-top: 1px; }
.g-clip { width: 160px; } .g-clip .btns { padding-left: 6px; }
.g-data { width: 361px; } .g-data .btns { padding-left: 7px; }
.g-query { width: 118px; } .g-query .btns { padding-left: 10px; }
.g-insert { width: 147px; } .g-insert .btns { padding-left: 6px; }
.g-calc { width: 188px; } .g-calc .btns { padding-left: 9px; }
.g-sens { width: 74px; }
.g-share { width: 59px; }
.g-copilot { width: 60px; }
.rb { display: flex; flex-direction: column; align-items: center; flex: none; }
.w36 { width: 36px; } .w40 { width: 40px; } .w41 { width: 41px; } .w44 { width: 44px; } .w47 { width: 47px; } .w48 { width: 48px; } .w50 { width: 50px; } .w52 { width: 52px; } .w53 { width: 53px; } .w54 { width: 54px; } .w56 { width: 56px; } .w72 { width: 72px; }
.i32 { width: 32px; height: 32px; overflow: visible; }
.rl { margin-top: 4px; text-align: center; line-height: 16px; color: #323130; white-space: nowrap; }
.chv { display: inline-block; width: 7px; height: 5px; margin-left: 2px; vertical-align: 1px; stroke: #444; }
.off .rl, .off .sm { color: #bdbdbd; }
.off .chv { stroke: #bbb; }
.small { margin: -4px 0 0 1px; }
.sm { display: flex; align-items: center; gap: 4px; height: 26px; white-space: nowrap; }
.s16 { width: 16px; height: 16px; }
.xl { font: 700 11px "Liberation Sans", sans-serif; fill: #fff; stroke: none; text-anchor: middle; }
.fx { font: italic 15px "Liberation Serif", serif; fill: #aaa; stroke: none; }
.collapse { position: absolute; right: 7px; top: 83px; width: 9px; height: 6px; stroke: #333; stroke-width: 1.500; }

/* work area */
.work { height: 1197px; display: grid; grid-template-columns: 41px 2836px 201px 181px 181px; grid-template-rows: 1162px 35px; }
.leftnav { grid-row: 1 / 3; background: #f3f3f3; border-bottom: 1px solid #ccc; }
.navi { height: 40px; display: flex; align-items: center; justify-content: center; }
.navi.on { box-shadow: inset 3px 0 0 #117865; }
.s16b { width: 16px; height: 16px; }
.dax { font: 6px "Liberation Sans", sans-serif; fill: #444; stroke: none; text-anchor: middle; }

.canvas { position: relative; overflow: hidden; background: linear-gradient(90deg, #4a4693 0%, #5d499b 42%, #6e4ca8 60%, #7e50ae 76%, #9155bf 100%); }
.guide { position: absolute; left: 390px; width: 2052px; top: 0; bottom: 7px; border: 1px dotted rgba(40,30,70,.22); border-top: 0; }
.visual { position: absolute; background: #fafafd; box-shadow: 10px 10px 20px rgba(20,10,40,.38); }
.kpi { left: 507px; top: 353px; width: 450px; height: 449px; display: flex; flex-direction: column; align-items: center; justify-content: center; padding-top: 22px; }
.kpi-val { font-family: Lato, sans-serif; font-size: 92px; line-height: 92px; color: #252423; transform: scaleX(.86); }
.kpi-lab { font-family: Lato, sans-serif; font-size: 25.500px; line-height: 32px; color: #605e5c; margin-top: 4px; }

.chart { left: 1038px; top: 118px; width: 1343px; height: 916px; display: flex; flex-direction: column; }
.ch-title { margin: 0; height: 34px; padding-left: 9px; font-family: Roboto, sans-serif; font-weight: 400; font-size: 25px; line-height: 34px; color: #252423; letter-spacing: 1.050px; white-space: nowrap; }
.legend { height: 24px; margin-top: 17px; padding-left: 9px; display: flex; align-items: center; gap: 10px; font-family: Lato, sans-serif; font-size: 19px; color: #605e5c; }
.legend b { width: 62px; font-size: 21px; letter-spacing: .3px; }
.li { display: flex; align-items: center; gap: 4px; flex: none; }
.li i { width: 16px; height: 16px; border-radius: 50%; display: block; }
.more { margin-left: auto; margin-right: 26px; width: 0; height: 0; border-left: 9px solid #333; border-top: 7px solid transparent; border-bottom: 7px solid transparent; }
.c1{background:#7f50c8}.c2{background:#5bc9c9}.c3{background:#3f92fc}.c4{background:#fc9b7c}.c5{background:#ef5758}.c6{background:#531e73}.c7{background:#ee5c99}.c8{background:#a83a72}.c9{background:#bb85f9}.c10{background:#8ceed2}.c11{background:#8bd2ea}.c12{background:#fdbfa3}.c13{background:#fd8186}.c14{background:#9636ba}.c15{background:#fc82b8}.c16{background:#fc8ade}.c17{background:#b266fb}.c18{background:#69b09c}.c19{background:#4f9bbd}.c20{background:#ba7053}.c21{background:#ba4d4d}.c22{background:#6f268f}.c23{background:#fd5da8}.c24{background:#bb4f9a}.c25{background:#532d80}
.plot { display: block; width: 1343px; height: 834px; margin-top: 7px; flex: none; }
.grid path { stroke: #cfcfcf; stroke-width: 1.500; stroke-dasharray: 1.500 6; fill: none; }
.tick text { font-family: Lato, sans-serif; font-size: 17.500px; fill: #605e5c; text-anchor: middle; }
.xt { font-family: Lato, sans-serif; font-size: 22px; fill: #252423; text-anchor: middle; letter-spacing: .7px; }
.yt { font-family: "Liberation Sans", sans-serif; font-size: 23px; fill: #252423; text-anchor: middle; }

/* filters */
.filters { background: #9155bf; border-left: 1px solid #b9b8a4; color: #fff; }
.fhead { height: 45px; display: flex; align-items: center; padding: 0 0 6px 15px; font-size: 15px; font-weight: 500; }
.fi { width: 14px; height: 12px; stroke: #fff; stroke-width: 1.500; margin-right: 9px; }
.fe { width: 11px; height: 8px; stroke: #fff; margin-left: 70px; }
.fc { width: 9px; height: 9px; stroke: #fff; stroke-width: 1.500; margin-left: 19px; }
.fsearch { height: 31px; margin: 0 11px 0 8px; border: 1px solid #b9b3b8; display: flex; align-items: center; padding-left: 11px; gap: 15px; font-size: 13px; }
.s14w { width: 12px; height: 12px; stroke: #fff; }
.fsec { padding: 17px 8px 0; }
.fsearch + .fsec { margin-top: 4px; border-top: 1px solid #b9b3b8; }
.frow { height: 17px; display: flex; justify-content: space-between; align-items: center; padding-right: 8px; line-height: 17px; }
.dots { font-weight: 700; line-height: 10px; }
.fbox { margin-top: 8px; height: 46px; border: 1px solid #c4bcc8; margin-bottom: 10px; display: flex; align-items: center; justify-content: center; font-size: 12px; padding-top: 1px; }

/* panes */
.viz, .data { grid-row: 1 / 3; background: #f4f4f4; border-right: 1px solid #ccc; border-bottom: 1px solid #ccc; }
.viz { grid-column: 4; }
.data { grid-column: 5; border-right: 0; }
.phead { height: 40px; display: flex; align-items: center; justify-content: space-between; padding: 0 10px 3px 9px; font-size: 15px; color: #252423; }
.pc { width: 9px; height: 9px; stroke: #333; stroke-width: 1.500; }
.bv { margin: 0 0 0 9px; font-weight: 500; color: #252423; height: 17px; line-height: 13px; }
.vtabs { display: flex; gap: 38px; height: 44px; padding: 0 0 0 9px; border-bottom: 1px solid #ddd; position: relative; }
.vt { width: 32px; height: 32px; display: flex; align-items: center; justify-content: center; }
.vt.on { background: #fff; }
.s24 { width: 24px; height: 24px; }
.vicons { margin: 7px 0 0 6px; display: grid; grid-template-columns: repeat(6, 28px); grid-auto-rows: 28px; }
.v { width: 19px; height: 19px; justify-self: center; align-self: center; }
.cardi { border: 1px solid #555; display: flex; align-items: center; justify-content: center; color: #2b88d8; font-size: 10px; width: 19px; height: 17px; letter-spacing: -.5px; }
.lang { color: #2b88d8; font-weight: 700; display: flex; align-items: center; justify-content: center; font-size: 17px; font-family: "Liberation Sans", sans-serif; }
.lcard { position: relative; display: block; }
.lcard em { position: absolute; left: 5px; top: 5px; font-style: normal; font-size: 9px; color: #2b88d8; letter-spacing: -.3px; }
.vmore { margin-left: 10px; font-weight: 700; height: 32px; padding-top: 3px; line-height: 12px; color: #444; }
.vsec { border-top: 1px solid #ddd; padding: 9px 5px 0; }
.vl { padding-left: 8px; line-height: 16px; height: 22px; }
.dash { height: 28px; border: 1px dashed #ccc; padding-left: 11px; line-height: 26px; }
.dash.white { background: #fff; height: 26px; padding-left: 8px; line-height: 24px; margin-top: 4px; }
.vb { padding-left: 8px; font-weight: 500; margin-top: 9px; height: 20px; line-height: 20px; }
.tgrow { height: 27px; padding: 0 15px 0 8px; display: flex; justify-content: space-between; align-items: center; }
.tgrow + .dash { margin-top: 6px; }
.tg { width: 32px; height: 16px; border-radius: 8px; display: flex; align-items: center; font-size: 8px; gap: 2px; padding: 0 3px; }
.tg u { width: 8px; height: 8px; border-radius: 50%; display: block; }
.tg.off { border: 1px solid #666; color: #666; }
.tg.off u { background: #666; }
.tg.ton { background: #117865; color: #fff; justify-content: space-between; }
.tg.ton u { background: #fff; }
.dsearch { margin: 5px 4px 0 4px; height: 24px; background: #fff; border: 1px solid #ddd; border-bottom: 1px solid #777; border-radius: 4px; display: flex; align-items: center; gap: 10px; padding-left: 12px; font-size: 13px; color: #666; }
.tree { list-style: none; margin: 10px 0 0; padding: 0 0 0 17px; font-size: 12.500px; color: #444; }
.tree li { height: 24px; display: flex; align-items: center; }
.tc { width: 5px; height: 9px; stroke: #555; margin-right: 7px; }
.tt { width: 12px; height: 12px; stroke: #333; margin-right: 6px; }

/* page tabs */
.pagetabs { grid-column: 2 / 4; grid-row: 2; background: #fff; border-bottom: 2px solid #ccc; display: flex; }
.pt-ctl { width: 128px; height: 33px; display: flex; align-items: center; border-right: 1px solid #aaa; padding-left: 10px; flex: none; }
.dev { width: 24px; display: flex; justify-content: center; margin-right: 20px; height: 33px; align-items: center; padding-bottom: 6px; flex: none; }
.dev.on { box-shadow: inset 0 -3px 0 #117865; height: 31px; align-self: flex-start; padding-bottom: 4px; }
.dev.mobile { margin-right: 15px; }
.mob { width: 10px; height: 20px; stroke: #444; }
.arr { width: 6px; height: 10px; stroke: #777; margin-right: 15px; }
.arr:last-child { margin-right: 0; }
.pt { height: 33px; display: flex; align-items: center; justify-content: center; font-size: 12.500px; color: #323130; border-right: 1px solid #ddd; position: relative; padding-bottom: 3px; }
.t1 { width: 122px; } .t2 { width: 84px; } .t3 { width: 108px; }
.t2.on { box-shadow: inset 0 -4px 0 #117865; }
.x { position: absolute; right: 3px; top: -1px; font-size: 12px; font-weight: 700; color: #222; line-height: 16px; }
.addtab { width: 39px; height: 33px; background: #117865; color: #fff; font: 700 22px/30px "Liberation Sans", sans-serif; text-align: center; }

/* status */
.status { height: 25px; background: #f3f3f3; border-bottom: 1px solid #bbb; display: flex; align-items: center; justify-content: space-between; padding-left: 4px; position: relative; color: #444; }
.blackline { position: absolute; left: 2690px; right: 0; bottom: -1px; height: 1px; background: #111; }
.zoom { display: flex; align-items: center; }
.zm { font-weight: 700; width: 7px; text-align: center; margin-right: 4px; }
.zline { width: 100px; height: 1px; background: #444; position: relative; display: block; }
.ztick { position: absolute; left: 50px; top: -2px; width: 1px; height: 5px; background: #444; }
.zthumb { position: absolute; left: 57px; top: -5px; width: 4px; height: 11px; background: #444; }
.zp { font-size: 15px; margin: 0 13px 0 6px; }
.zv { font-size: 13px; margin-right: 13px; color: #555; }
.zf { width: 14px; height: 10px; margin-right: 19px; }

/* taskbar */
.taskbar { height: 48px; background: linear-gradient(90deg, #dcefc0 0, #d3e9c4 240px, #e3eea8 640px, #f0eba8 1000px, #f6e8d0 1400px, #f2efe6 1900px, #d8f5f0 2200px, #cbe6ec 3440px); position: relative; display: flex; align-items: center; justify-content: flex-end; }
.tb-center { position: absolute; left: 1420px; top: 0; height: 48px; display: flex; align-items: center; }
.win { width: 24px; height: 24px; margin-right: 14px; }
.tsearch { width: 218px; height: 30px; border-radius: 15px; background: #fbf6ef; border: 1px solid #e4dccd; display: flex; align-items: center; padding-left: 10px; gap: 10px; font-size: 14px; color: #555; margin-right: 13px; }
.s16d { width: 16px; height: 16px; stroke: #222; stroke-width: 1.300; }
.clap { width: 38px; height: 24px; margin-left: auto; margin-right: 4px; }
.s24t { width: 24px; height: 24px; margin-right: 20px; }
.s22t { width: 22px; height: 24px; margin-right: 22px; }
.tv { margin-right: 13px; }
.tb-active { width: 38px; height: 38px; background: rgba(255,255,255,.55); border-radius: 4px; display: flex; align-items: center; justify-content: center; margin-right: 13px; position: relative; }
.tb-active .s24t { margin: 0; }
.tb-active i { position: absolute; bottom: 1px; left: 11px; width: 16px; height: 3px; border-radius: 2px; background: #0f78d4; }
.tray { display: flex; align-items: center; padding-right: 19px; }
.tr-c { width: 11px; height: 6px; stroke: #222; margin-right: 21px; }
.tr-w { width: 16px; height: 12px; stroke: #222; margin-right: 8px; }
.tr-s { width: 16px; height: 12px; stroke: #222; margin-right: 22px; }
.clock { display: flex; flex-direction: column; align-items: flex-end; font-size: 12px; line-height: 16px; color: #222; letter-spacing: .4px; }
```
FILE: app.js
```js
// Scatter points of the "Developer Answered by Average Rating" chart.
(function () {
  var NS = 'http://www.w3.org/2000/svg';
  var g = document.getElementById('dots');
  var seed = 20250301;
  function rnd() {
    seed |= 0; seed = seed + 0x6D2B79F5 | 0;
    var t = Math.imul(seed ^ seed >>> 15, 1 | seed);
    t = t + Math.imul(t ^ t >>> 7, 61 | t) ^ t;
    return ((t ^ t >>> 14) >>> 0) / 4294967296;
  }
  function dot(x, y, c, o) {
    var e = document.createElementNS(NS, 'ellipse');
    e.setAttribute('cx', x.toFixed(1));
    e.setAttribute('cy', y.toFixed(1));
    e.setAttribute('rx', 7);
    e.setAttribute('ry', 7.5);
    e.setAttribute('fill', c);
    e.setAttribute('fill-opacity', o);
    g.appendChild(e);
  }
  var pal = ['#7f50c8','#5bc9c9','#3f92fc','#fc9b7c','#ef5758','#531e73','#ee5c99','#a83a72','#bb85f9','#8ceed2','#8bd2ea','#fdbfa3','#9636ba','#fc82b8','#b266fb','#69b09c','#4f9bbd','#ba7053','#ba4d4d','#6f268f','#bb4f9a','#532d80','#4d5a50','#3a3f48','#6b6660','#2b3a2e','#77807a','#555a6a','#2f7a3c','#7f8f30','#1f2f5a','#8a8a70','#5e4a6c','#e040e0','#3bd03b','#b0f01f','#1a3fc0','#4d5a50','#3a3f48','#6b6660','#2b3a2e','#77807a','#555a6a','#8a8a70','#5e4a6c','#405060','#7a6a5a','#604050'];
  function env(y) {
    if (y < 530) return 128;
    if (y < 610) return 128 - (y - 530) * 0.55;
    if (y < 720) return 84 - (y - 610) * 0.38;
    return 30;
  }
  var i, y, x;
  for (i = 0; i < 700; i++) {
    y = 386 + rnd() * 320;
    var w = env(y), d;
    do { d = -Math.log(1 - rnd()) * w / 2.8; } while (d > w);
    x = 1148 + d;
    dot(x, y, pal[Math.floor(rnd() * pal.length)], 0.85);
  }
  for (i = 0; i < 45; i++) {
    y = 700 + rnd() * 400;
    x = 1148 + rnd() * 9;
    dot(x, y, pal[Math.floor(rnd() * pal.length)], 0.86);
  }
  var z5 = [[625,325,'#5f8a7e'],[680,342,'#fb8ec8'],[958,338,'#cdf069'],[420,325,'#4d6466'],[695,431,'#5b636d'],[1238,416,'#605e58'],[938,464,'#333547'],[804,506,'#2b2a4d'],[869,520,'#6e7062'],[846,553,'#4f5866'],[705,521,'#84ee62'],[1183,572,'#f6fa8a'],[623,563,'#ef6da8'],[556,566,'#295471'],[597,501,'#6f7f74'],[586,395,'#8b9793'],[620,398,'#78b5a3'],[536,364,'#fb9a7a'],[508,370,'#6fb08f'],[520,388,'#90626a'],[460,396,'#7f2a6e'],[528,433,'#fbf75a'],[545,441,'#3d63b8'],[561,468,'#216b4b'],[512,472,'#2b3a9a'],[547,522,'#7a7a35'],[480,542,'#5f46b5'],[492,551,'#76b5aa'],[439,550,'#c4606f'],[441,599,'#454f48'],[428,634,'#f688d0'],[430,675,'#55647f'],[537,679,'#e3d5c4'],[584,697,'#ec6463'],[651,710,'#8f8346'],[534,800,'#8a6b4a'],[369,790,'#fce098'],[436,918,'#636b32'],[379,948,'#1e6b2a'],[342,919,'#6ffae6'],[448,1074,'#3b8532'],[397,1119,'#bf5c93'],[544,1171,'#585a6b'],[271,1182,'#b013b0'],[262,1122,'#25392f'],[268,1078,'#dcdcc0'],[298,1040,'#8a4a6c'],[365,538,'#4af01a'],[393,748,'#a0677e'],[385,755,'#3a7a8f'],[348,765,'#5fb592'],[367,870,'#2a2c30'],[350,860,'#555260'],[365,835,'#a6e8de'],[313,908,'#ffb5a5'],[372,356,'#b4a8e8'],[348,384,'#a8c060'],[275,408,'#a8b8e0'],[214,406,'#0a1ea0'],[238,448,'#f050e8'],[277,484,'#f888d0'],[442,484,'#b0f050'],[228,590,'#4f90b8'],[340,630,'#8a6a28'],[372,673,'#a860c8'],[208,770,'#d0f840'],[268,895,'#7878e0'],[237,980,'#a098e8'],[220,1022,'#4a2a70']];
  var z6 = [[514,204,'#8a4a5c'],[278,243,'#334a7a'],[250,250,'#3a9080'],[257,272,'#5a9080'],[301,296,'#b0b09c'],[231,322,'#75857a'],[227,355,'#fce08f'],[270,364,'#56685e'],[238,393,'#2b2e3c'],[259,451,'#5a3f9e'],[307,490,'#3a4551'],[281,525,'#8f65cc'],[223,565,'#5b6d65'],[237,603,'#c25b28'],[275,660,'#3f2f75'],[233,702,'#2db59a'],[283,715,'#8ffd7a'],[213,727,'#a09d6a'],[223,758,'#8f8466'],[257,821,'#7ebf1a'],[232,834,'#3b5b99'],[470,825,'#59bc3c'],[352,957,'#525f4d'],[499,960,'#7b8f50'],[233,1074,'#664f6c'],[228,1153,'#7a3f8f'],[215,1155,'#7f7560'],[205,1232,'#fdb26c'],[205,1257,'#807080'],[205,1050,'#b8b83a'],[210,1088,'#0f70c0'],[205,1025,'#f56a8c'],[205,961,'#7a6fad'],[205,915,'#1f2233'],[205,878,'#3f3f5a'],[205,835,'#7a3f8f'],[205,779,'#9c3fd0'],[205,1316,'#12db62'],[205,640,'#88dcc4'],[205,597,'#757089'],[205,546,'#3f5448'],[205,507,'#7a7260'],[205,458,'#a5a095'],[212,420,'#c8504f'],[205,345,'#7a3a5f'],[210,286,'#131a60'],[205,235,'#7a5a85'],[243,182,'#c74da5'],[220,168,'#8a1535'],[223,140,'#1f2f40'],[240,103,'#b0f01f'],[257,60,'#606a58'],[210,60,'#3a6a90'],[228,40,'#88d0f0'],[243,10,'#b08a70'],[218,20,'#8a8a70'],[205,80,'#b0c5c5'],[212,118,'#3a5a40'],[207,190,'#a860f0']];
  var z10 = [[272,336,'#dffd8a'],[191,414,'#8e8c98'],[706,367,'#5b1fc0'],[622,600,'#d5e2c4'],[1231,352,'#5a4e62'],[1420,399,'#d79bea']];
  z5.forEach(function (p) { dot(1060 + p[0] / 2.24, 280 + p[1] / 3, p[2], 0.92); });
  z6.forEach(function (p) { dot(1060 + p[0] / 2.24, 680 + p[1] / 2.904, p[2], 0.92); });
  z10.forEach(function (p) { dot(1700 + p[0] / 2.063, 280 + p[1] / 3, p[2], 0.95); });
})();
```
